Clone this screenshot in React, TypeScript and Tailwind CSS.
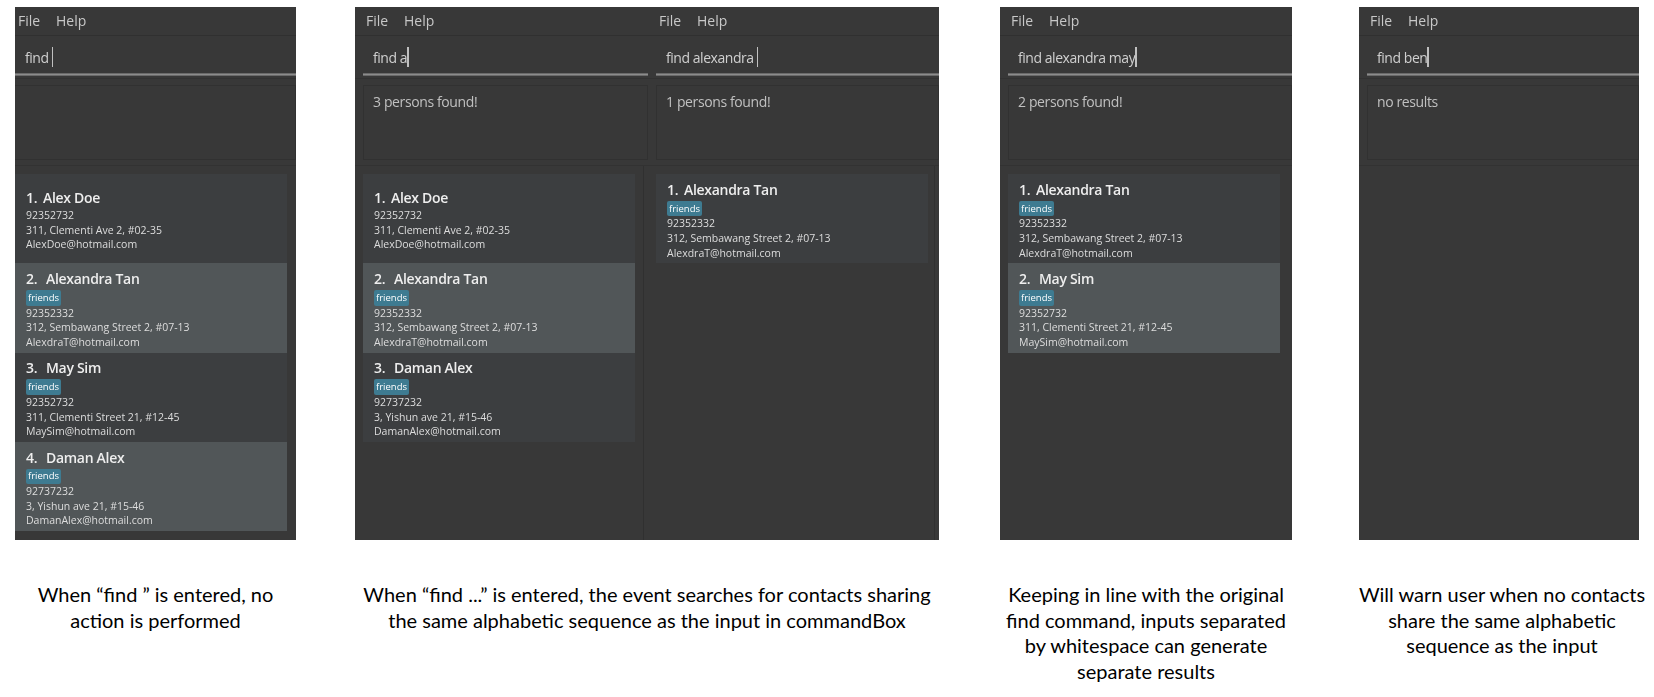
interface Person {
  name: string;
  tag?: boolean;
  phone: string;
  address: string;
  email: string;
}

const ALEX: Person = { name: "Alex Doe", phone: "92352732", address: "311, Clementi Ave 2, #02-35", email: "AlexDoe@hotmail.com" };
const ALEXANDRA: Person = { name: "Alexandra Tan", tag: true, phone: "92352332", address: "312, Sembawang Street 2, #07-13", email: "AlexdraT@hotmail.com" };
const MAY: Person = { name: "May Sim", tag: true, phone: "92352732", address: "311, Clementi Street 21, #12-45", email: "MaySim@hotmail.com" };
const DAMAN: Person = { name: "Daman Alex", tag: true, phone: "92737232", address: "3, Yishun ave 21, #15-46", email: "DamanAlex@hotmail.com" };

function Card({ person, index }: { person: Person; index: number }) {
  return (
    <div
      className={`flex h-[89.25px] w-[272px] flex-col justify-center pt-[3px] pl-[11px] ${
        index % 2 === 0 ? "bg-[#3c3e40]" : "bg-[#515658]"
      }`}
    >
      <div className="flex h-[20px] items-center text-[14px] leading-[20px] font-semibold tracking-[-0.3px] text-[#eeeeee]">
        <span className={index === 0 ? "w-[17px]" : "w-[20px]"}>{index + 1}.</span>
        {person.name}
      </div>
      {person.tag ? (
        <div className="mt-[1px] flex h-[15.5px] w-[35px] items-center justify-center rounded-[2px] bg-[#3e7b91] text-[9.5px] text-white">
          friends
        </div>
      ) : null}
      <div className="text-[10.5px] leading-[14.6px] text-[#dddddd]">{person.phone}</div>
      <div className="text-[10.5px] leading-[14.6px] text-[#dddddd]">{person.address}</div>
      <div className="text-[10.5px] leading-[14.6px] text-[#dddddd]">{person.email}</div>
    </div>
  );
}

function AppWindow({
  width,
  command,
  message,
  people = [],
  cropped = false,
  divider = false,
}: {
  width: string;
  command: string;
  message?: string;
  people?: Person[];
  cropped?: boolean;
  divider?: boolean;
}) {
  const inset = cropped ? "pl-0" : "pl-[8px]";
  return (
    <div className={`flex h-full flex-col bg-[#383838] font-['Open_Sans',sans-serif] blur-[0.5px] ${width}`}>
      {/* Menu */}
      <div className={`flex h-[29px] items-center border-b border-[#303030] pb-[2px] text-[14px] text-[#c8c8c8] ${cropped ? "pl-[3px]" : "pl-[11px]"}`}>
        <span className="w-[38px]">File</span>
        <span>Help</span>
      </div>

      {/* Command box */}
      <div className={inset}>
        <div className="flex h-[37px] items-center whitespace-pre pt-[6px] pl-[10px] text-[14px] tracking-[-0.45px] text-[#d0d0d0]">
          {command}
          <span className="-mt-[2px] h-[20px] w-[1.5px] bg-[#c0c0c0]" />
        </div>
        <div className="h-[3px] border-y border-[#6a6a6a] bg-[#8c8c8c]" />
      </div>

      {/* Result box */}
      <div className={`mt-[2px] border-t border-[#323232] pt-[6px] ${inset}`}>
        <div className={`h-[75px] border border-[#313131] pt-[6px] pl-[9px] text-[14px] leading-[20px] tracking-[-0.38px] text-[#c0c0c0] ${cropped ? "border-l-0" : ""}`}>
          {message}
        </div>
      </div>

      {/* Person list */}
      <div className="mt-[5px] flex min-h-0 flex-1 border-t border-[#323232]">
        <div className={`flex flex-col pt-[8px] ${inset}`}>
          {people.map((p, i) => (
            <Card key={p.name} person={p} index={i} />
          ))}
        </div>
        {divider ? <div className="mr-[4px] ml-auto w-px bg-[#303030]" /> : null}
      </div>
    </div>
  );
}

function Caption({ lines, className }: { lines: string[]; className: string }) {
  return (
    <div className={`flex flex-col items-center pt-[42px] font-['Lato',sans-serif] text-[20px] leading-[25.7px] whitespace-nowrap text-black ${className}`}>
      {lines.map((l) => (
        <div key={l}>{l}</div>
      ))}
    </div>
  );
}

export default function App() {
  return (
    <div className="h-[697px] w-[1654px] overflow-hidden bg-white pt-[7px] pl-[15px]">
      <div className="flex h-[533px]">
        <AppWindow width="w-[281px]" cropped command="find " people={[ALEX, ALEXANDRA, MAY, DAMAN]} />
        <div className="ml-[59px] flex h-full">
          <AppWindow width="w-[293px]" command="find a" message="3 persons found!" people={[ALEX, ALEXANDRA, DAMAN]} divider />
          <AppWindow width="w-[291px]" command="find alexandra " message="1 persons found!" people={[ALEXANDRA]} divider />
        </div>
        <div className="ml-[61px] h-full">
          <AppWindow width="w-[292px]" command="find alexandra may" message="2 persons found!" people={[ALEXANDRA, MAY]} />
        </div>
        <div className="ml-[67px] h-full">
          <AppWindow width="w-[280px]" command="find ben" message="no results" />
        </div>
      </div>
      <div className="flex">
        <Caption className="w-[281px]" lines={["When “find ” is entered, no", "action is performed"]} />
        <Caption className="ml-[59px] w-[584px]" lines={["When “find ...” is entered, the event searches for contacts sharing", "the same alphabetic sequence as the input in commandBox"]} />
        <Caption className="ml-[61px] w-[292px]" lines={["Keeping in line with the original", "find command, inputs separated", "by whitespace can generate", "separate results"]} />
        <Caption className="ml-[67px] w-[286px]" lines={["Will warn user when no contacts", "share the same alphabetic", "sequence as the input"]} />
      </div>
    </div>
  );
}
